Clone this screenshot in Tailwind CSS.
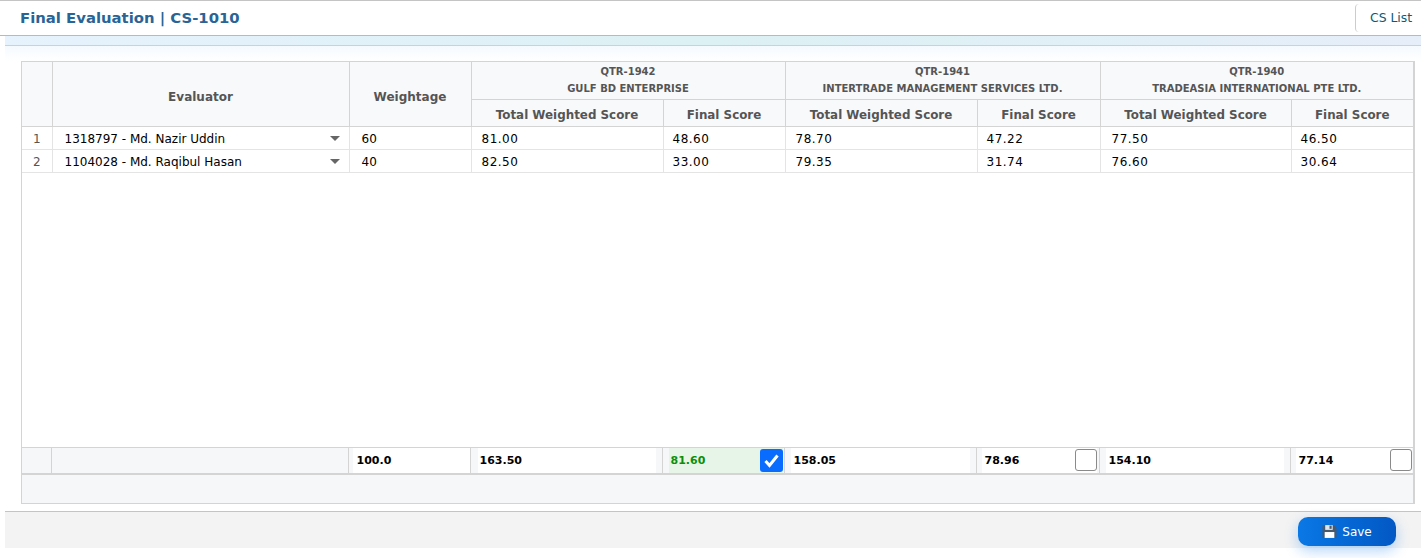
<!DOCTYPE html>
<html lang="en">
<head>
    <meta charset="UTF-8">
    <title>Final Evaluation</title>
    <script src="https://cdn.jsdelivr.net/npm/@tailwindcss/browser@4"></script>
</head>
<body class="bg-white h-[558px] w-[1421px] overflow-hidden font-['DejaVu_Sans',sans-serif] text-[11px] text-black">

    <!-- Title bar -->
    <div class="h-[36px] border-t border-t-[#c4c4c4] border-b border-b-[#b9b9b9] flex items-center justify-between pl-[20px]">
        <h1 class="text-[14.85px] font-bold text-[#2a6496] pt-[1px]">Final Evaluation | CS-1010</h1>
        <div class="h-[28px] w-[66px] border-l border-[#ccc] rounded-l flex items-center pl-[14px] text-[12.4px] text-[#0d5a75]">CS List</div>
    </div>
    <div class="ml-[5px] h-[10px] border-b border-b-[#b3d7fb] bg-gradient-to-r from-[#e6f2fd] via-[#dcf1f4] to-[#e6eef9]"></div>
    <div class="ml-[5px] h-[15px] bg-gradient-to-b from-[#f5faff] to-white"></div>

    <!-- Grid -->
    <div class="ml-[21px] w-[1394px] h-[443px] border border-[#d4d4d4] border-r-2 flex flex-col">
        <table class="table-fixed w-full border-collapse">
            <colgroup>
                <col class="w-[30px]"><col class="w-[297px]"><col class="w-[122px]">
                <col class="w-[192px]"><col class="w-[122px]">
                <col class="w-[192px]"><col class="w-[123px]">
                <col class="w-[191px]"><col>
            </colgroup>
            <thead class="bg-[#f8f9fb] text-[#555]">
                <tr class="h-[37px]">
                    <th rowspan="2" class="border-r border-b border-[#d4d4d4]"></th>
                    <th rowspan="2" class="border-r border-b border-[#d4d4d4] text-[12px] pt-[7px]">Evaluator</th>
                    <th rowspan="2" class="border-r border-b border-[#d4d4d4] text-[12px] pt-[7px]">Weightage</th>
                    <th colspan="2" class="border-r border-b border-[#d4d4d4] text-[10px] leading-[17px]">QTR-1942<br>GULF BD ENTERPRISE</th>
                    <th colspan="2" class="border-r border-b border-[#d4d4d4] text-[10px] leading-[17px]">QTR-1941<br>INTERTRADE MANAGEMENT SERVICES LTD.</th>
                    <th colspan="2" class="border-b border-[#d4d4d4] text-[10px] leading-[17px]">QTR-1940<br>TRADEASIA INTERNATIONAL PTE LTD.</th>
                </tr>
                <tr class="h-[27px]">
                    <th class="border-r border-b border-[#d4d4d4] text-[11.9px] pt-[7px]">Total Weighted Score</th>
                    <th class="border-r border-b border-[#d4d4d4] text-[11.9px] pt-[7px]">Final Score</th>
                    <th class="border-r border-b border-[#d4d4d4] text-[11.9px] pt-[7px]">Total Weighted Score</th>
                    <th class="border-r border-b border-[#d4d4d4] text-[11.9px] pt-[7px]">Final Score</th>
                    <th class="border-r border-b border-[#d4d4d4] text-[11.9px] pt-[7px]">Total Weighted Score</th>
                    <th class="border-b border-[#d4d4d4] text-[11.9px] pt-[7px]">Final Score</th>
                </tr>
            </thead>
            <tbody class="text-[12px]">
                <tr class="h-[23px]">
                    <td class="border-r border-b border-[#e4e4e4] text-center text-[#555] pt-[2px]">1</td>
                    <td class="border-r border-b border-[#e4e4e4] pl-[12px] pt-[2px]">
                        <div class="flex items-center justify-between pr-[9px]">1318797 - Md. Nazir Uddin<span class="w-0 h-0 border-x-[5px] border-x-transparent border-t-[5px] border-t-[#666]"></span></div>
                    </td>
                    <td class="border-r border-b border-[#e4e4e4] pl-[12px] pt-[2px]">60</td>
                    <td class="border-r border-b border-[#e4e4e4] pl-[10px] pt-[2px] tracking-[0.5px]">81.00</td>
                    <td class="border-r border-b border-[#e4e4e4] pl-[9px] pt-[2px] tracking-[0.5px]">48.60</td>
                    <td class="border-r border-b border-[#e4e4e4] pl-[10px] pt-[2px] tracking-[0.5px]">78.70</td>
                    <td class="border-r border-b border-[#e4e4e4] pl-[9px] pt-[2px] tracking-[0.5px]">47.22</td>
                    <td class="border-r border-b border-[#e4e4e4] pl-[11px] pt-[2px] tracking-[0.5px]">77.50</td>
                    <td class="border-b border-[#e4e4e4] pl-[9px] pt-[2px] tracking-[0.5px]">46.50</td>
                </tr>
                <tr class="h-[23px]">
                    <td class="border-r border-b border-[#e4e4e4] text-center text-[#555] pt-[2px]">2</td>
                    <td class="border-r border-b border-[#e4e4e4] pl-[12px] pt-[2px]">
                        <div class="flex items-center justify-between pr-[9px]">1104028 - Md. Raqibul Hasan<span class="w-0 h-0 border-x-[5px] border-x-transparent border-t-[5px] border-t-[#666]"></span></div>
                    </td>
                    <td class="border-r border-b border-[#e4e4e4] pl-[12px] pt-[2px]">40</td>
                    <td class="border-r border-b border-[#e4e4e4] pl-[10px] pt-[2px] tracking-[0.5px]">82.50</td>
                    <td class="border-r border-b border-[#e4e4e4] pl-[9px] pt-[2px] tracking-[0.5px]">33.00</td>
                    <td class="border-r border-b border-[#e4e4e4] pl-[10px] pt-[2px] tracking-[0.5px]">79.35</td>
                    <td class="border-r border-b border-[#e4e4e4] pl-[9px] pt-[2px] tracking-[0.5px]">31.74</td>
                    <td class="border-r border-b border-[#e4e4e4] pl-[11px] pt-[2px] tracking-[0.5px]">76.60</td>
                    <td class="border-b border-[#e4e4e4] pl-[9px] pt-[2px] tracking-[0.5px]">30.64</td>
                </tr>
            </tbody>
        </table>
        <div class="flex-1"></div>

        <!-- Totals -->
        <table class="table-fixed w-full border-collapse font-bold">
            <colgroup>
                <col class="w-[29px]"><col class="w-[297px]"><col class="w-[122px]">
                <col class="w-[192px]"><col class="w-[122px]">
                <col class="w-[192px]"><col class="w-[123px]">
                <col class="w-[191px]"><col>
            </colgroup>
            <tr class="h-[27px] border-t border-t-[#d4d4d4] border-b-2 border-b-[#d4d4d4] bg-[#f6f7f9]">
                <td class="border-r border-[#d4d4d4]"></td>
                <td class="border-r border-[#d4d4d4]"></td>
                <td class="border-r border-[#d4d4d4] pl-[4px]"><div class="bg-white h-[25px] leading-[26px] pl-[4px]">100.0</div></td>
                <td class="border-r border-[#d4d4d4] pl-[7px] pr-[6px]"><div class="bg-white h-[25px] leading-[26px] pl-[2px]">163.50</div></td>
                <td class="border-r border-[#d4d4d4] pl-[6px] pr-[1px]">
                    <div class="flex items-center justify-between h-[25px] bg-[#e6f5e8] text-[#0a8f0a] pl-[2px]"><span class="pt-[1px]">81.60</span>
                        <span class="w-[23px] h-[23px] rounded-[3px] bg-[#0a6cff] flex items-center justify-center">
                            <svg width="17" height="17" viewBox="0 0 17 17"><path d="M2.5 9 L6.5 13.5 L14.5 3.5" fill="none" stroke="white" stroke-width="3"/></svg>
                        </span>
                    </div>
                </td>
                <td class="border-r border-[#d4d4d4] pl-[6px] pr-[6px]"><div class="bg-white h-[25px] leading-[26px] pl-[3px]">158.05</div></td>
                <td class="border-r border-[#d4d4d4] pl-[5px] pr-[2px]">
                    <div class="flex items-center justify-between h-[25px] bg-white pl-[3px]"><span class="pt-[1px]">78.96</span><span class="w-[22px] h-[22px] rounded-[3px] border border-[#8a8a8a] bg-white"></span></div>
                </td>
                <td class="border-r border-[#d4d4d4] pl-[6px] pr-[6px]"><div class="bg-white h-[25px] leading-[26px] pl-[3px]">154.10</div></td>
                <td class="pl-[5px] pr-[1px]">
                    <div class="flex items-center justify-between h-[25px] bg-white pl-[3px]"><span class="pt-[1px]">77.14</span><span class="w-[22px] h-[22px] rounded-[3px] border border-[#8a8a8a] bg-white"></span></div>
                </td>
            </tr>
        </table>
        <div class="h-[28px] bg-[#f6f7f9]"></div>
    </div>

    <!-- Footer -->
    <div class="ml-[5px] mt-[7px] h-[37px] border-t border-t-[#c4c4c4] bg-[#f3f3f3] flex justify-end pr-[25px] pt-[5px]">
        <button class="w-[98px] h-[29px] rounded-[10px] bg-gradient-to-r from-[#0a78e6] to-[#0358c4] text-white text-[12px] font-medium flex items-center justify-center gap-[5px] shadow-[0_5px_14px_rgba(10,120,230,0.3)]">
            <svg width="15" height="15" viewBox="0 0 14 14"><path d="M0.5 1 H11 L13.5 3.5 V13 H0.5 Z" fill="#4a5a6a"/><rect x="3" y="1" width="7" height="4.5" fill="#dfe6ee"/><rect x="7" y="1.5" width="2" height="3" fill="#4a5a6a"/><rect x="2.5" y="7.5" width="9" height="5.5" fill="white"/></svg>
            Save
        </button>
    </div>
</body>
</html>
